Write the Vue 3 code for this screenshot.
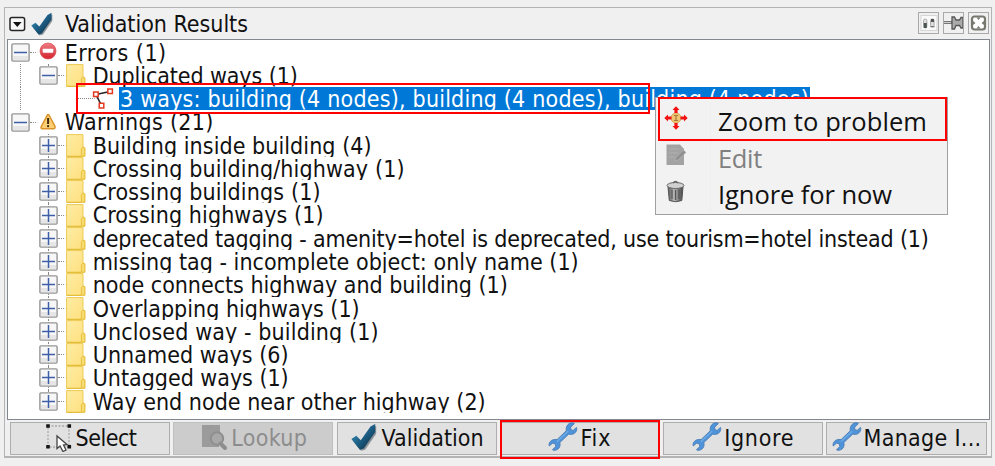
<script setup>
const rows = [
  { t: 'Errors (1)', level: 0, icon: 'error', open: true, w: 102 },
  { t: 'Duplicated ways (1)', level: 1, icon: 'folder', open: true, last: true, w: 205 },
  { t: '3 ways: building (4 nodes), building (4 nodes), building (4 nodes)', level: 2, icon: 'way', selected: true, w: 689 },
  { t: 'Warnings (21)', level: 0, icon: 'warning', open: true, last: true, w: 149 },
  { t: 'Building inside building (4)', level: 1, icon: 'folder', w: 279 },
  { t: 'Crossing building/highway (1)', level: 1, icon: 'folder', w: 312 },
  { t: 'Crossing buildings (1)', level: 1, icon: 'folder', w: 228 },
  { t: 'Crossing highways (1)', level: 1, icon: 'folder', w: 231 },
  { t: 'deprecated tagging - amenity=hotel is deprecated, use tourism=hotel instead (1)', level: 1, icon: 'folder', w: 836 },
  { t: 'missing tag - incomplete object: only name (1)', level: 1, icon: 'folder', w: 486 },
  { t: 'node connects highway and building (1)', level: 1, icon: 'folder', w: 415 },
  { t: 'Overlapping highways (1)', level: 1, icon: 'folder', w: 267 },
  { t: 'Unclosed way - building (1)', level: 1, icon: 'folder', w: 286 },
  { t: 'Unnamed ways (6)', level: 1, icon: 'folder', w: 196 },
  { t: 'Untagged ways (1)', level: 1, icon: 'folder', w: 196 },
  { t: 'Way end node near other highway (2)', level: 1, icon: 'folder', last: true, w: 393 },
]

const buttons = [
  { t: 'Select', icon: 'select', w: 61 },
  { t: 'Lookup', icon: 'lookup', w: 76, disabled: true },
  { t: 'Validation', icon: 'check', w: 102 },
  { t: 'Fix', icon: 'wrench', w: 31 },
  { t: 'Ignore', icon: 'wrench', w: 70 },
  { t: 'Manage I...', icon: 'wrench', w: 118 },
]

const menu = [
  { t: 'Zoom to problem', icon: 'zoom', w: 209 },
  { t: 'Edit', icon: 'edit', w: 44, disabled: true },
  { t: 'Ignore for now', icon: 'trash', w: 174 },
]

// Spreads a label's letters so that the label has the given width.
const vFit = {
  mounted(el, { value }) {
    const natural = el.getBoundingClientRect().width
    el.style.letterSpacing = (value - natural) / el.textContent.length + 'px'
  },
}
</script>

<template>
  <svg class="defs" width="0" height="0" aria-hidden="true">
    <defs>
      <linearGradient id="gCheck" x1="0" y1="0" x2="1" y2="1">
        <stop offset="0" stop-color="#3f9cc4" /><stop offset=".5" stop-color="#1d5f86" /><stop offset="1" stop-color="#0b2438" />
      </linearGradient>
      <linearGradient id="gFolder" x1="0" y1="0" x2="1" y2="1">
        <stop offset="0" stop-color="#ffeca5" /><stop offset="1" stop-color="#fddf7c" />
      </linearGradient>
      <linearGradient id="gRed" x1="0" y1="0" x2="0" y2="1">
        <stop offset="0" stop-color="#ee7f84" /><stop offset="1" stop-color="#d3222d" />
      </linearGradient>
      <linearGradient id="gTrash" x1="0" y1="0" x2="1" y2="0">
        <stop offset="0" stop-color="#555" /><stop offset=".4" stop-color="#bbb" /><stop offset="1" stop-color="#444" />
      </linearGradient>
      <symbol id="check" viewBox="0 0 22 24">
        <path d="M2 15.5 L5 13.5 L9 17 L18 4 L21.3 2.500 V9 L12 22.500 L8.500 23.500 Z" fill="#70777c" opacity=".75" />
        <path d="M.3 13.500 L4.500 10.800 L8.300 14.500 L16.500 3 L20.500 .8 V7.500 L10.800 21.500 L7.500 22.500 Z" fill="url(#gCheck)" />
      </symbol>
      <symbol id="wrench" viewBox="0 0 30 30">
        <path d="M21.2 1.6 C23.4 .4 25.7 .7 26.4 1.6 L22.6 5.2 L23.2 8.2 L25.3 8.2 L28.5 5.4 C29.6 8.2 27.5 11.7 24 12.3 L20.5 12.3 L11.8 20.6 C13 24.5 10.4 28.6 5.8 28.3 L4.5 27.8 L7.8 24.4 L7 21.5 L4.4 21.3 L1.2 24 C.3 20.8 3.3 17.3 7 17.5 L9.2 17.5 L18.2 8.8 C17.9 5.8 18.7 3.1 21.2 1.6 Z" fill="#4f93d8" stroke="#4a7db5" stroke-width=".9" />
        <path d="M9 19.5 L20 9.2" stroke="#8fc3f4" stroke-width="1.4" opacity=".5" />
      </symbol>
    </defs>
  </svg>
  <div class="page">
    <section class="panel">
      <header class="title">
        <svg class="arrow" width="17" height="16" viewBox="0 0 17 16">
          <rect x="1" y="1.5" width="14.6" height="13" rx="2" fill="#f7f7f7" stroke="#262626" stroke-width="1.5" />
          <path d="M4 6 H12.6 L8.3 11 Z" fill="#111" />
        </svg>
        <svg class="tick" width="22" height="24"><use href="#check" /></svg>
        <span class="heading"><span v-fit="183" class="label">Validation Results</span></span>
        <span class="tools">
          <span class="tool">
            <svg width="20" height="20" viewBox="0 0 20 20">
              <rect x="2" y="2.5" width="16" height="15" fill="#fafafa" stroke="#d5d5d5" />
              <rect x="4.5" y="6" width="3.4" height="9" rx="1.6" fill="#ddd" stroke="#a0a0a0" stroke-width=".8" />
              <rect x="4.8" y="10" width="3" height="5" fill="#4b5553" />
              <rect x="11.5" y="6" width="3.6" height="8" rx="1.6" fill="#ddd" stroke="#a0a0a0" stroke-width=".8" />
              <rect x="12" y="6" width="3" height="3" fill="#555" /><path d="M11.5 13.7 h4" stroke="#666" />
            </svg>
          </span>
          <span class="tool">
            <svg width="20" height="20" viewBox="0 0 20 20">
              <path d="M0 9.5 H8" stroke="#777" stroke-width="3" /><path d="M0 9.5 H7" stroke="#ccc" stroke-width="1" />
              <path d="M8 4 H10.5 L12 7 H15.5 L17 4.5 H19 V15 H17 L15.5 12.5 H12 L10.5 16 H8 Z" fill="#aaa" stroke="#555" stroke-width="1.3" />
            </svg>
          </span>
          <span class="tool">
            <svg width="20" height="20" viewBox="0 0 20 20">
              <rect x="3" y="3.5" width="13" height="13" rx="2.5" fill="#fff" stroke="#77776f" stroke-width="2.2" />
              <path d="M7.500 4.500 H11.500 L9.500 7 Z M7.500 15.500 H11.500 L9.500 13 Z M4 8 V12 L6.500 10 Z M15 8 V12 L12.500 10 Z" fill="#77776f" />
            </svg>
          </span>
        </span>
      </header>

      <div class="tree">
        <div v-for="(r, i) in rows" :key="i" class="row" :class="['level' + r.level, { last: r.last }]">
          <i v-if="i > 0 && i < 3" class="trunk"></i>
          <span class="toggle">
            <svg v-if="r.level < 2" width="19" height="19" viewBox="0 0 19 19">
              <rect x=".9" y=".9" width="17.2" height="17.2" rx="1" fill="#f7f7f7" stroke="#969696" stroke-width="1.4" />
              <path d="M2 13 H17 V17 H2 Z" fill="#e6e6e6" />
              <path d="M3 9.5 H16" stroke="#3e5fa8" stroke-width="1.5" />
              <path v-if="!r.open" d="M9.5 3 V16" stroke="#3e5fa8" stroke-width="1.5" />
            </svg>
          </span>
          <span class="dots"></span>
          <span class="icon">
            <svg v-if="r.icon === 'folder'" width="20" height="23" viewBox="0 0 20 23">
              <path d="M.6 .6 H17 V13 L18.8 13.6 V22.4 H.6 Z" fill="url(#gFolder)" stroke="#eccb52" stroke-width="1" />
              <path d="M15.4 22 V14.5 L17 13.2 L18.8 14 V22 Z" fill="#f7dc72" stroke="#e6c043" stroke-width="1" />
              <path d="M.6 22.4 H15" stroke="#e3bd3c" stroke-width="1.2" />
            </svg>
            <svg v-else-if="r.icon === 'error'" class="round error" width="18" height="18" viewBox="0 0 18 18">
              <circle cx="9" cy="9" r="8" fill="url(#gRed)" stroke="#dc4a50" stroke-width=".7" />
              <rect x="3.7" y="6.7" width="10.6" height="4" rx=".6" fill="#fff" />
            </svg>
            <svg v-else-if="r.icon === 'warning'" class="round" width="18" height="18" viewBox="0 0 18 18">
              <path d="M8.5 1.8 Q9.2 1 10 2 L16 13.3 Q16.5 15.5 14.8 15.7 H3.3 Q1.5 15.5 2.2 13.5 Z" fill="#fbcf72" stroke="#d9942c" stroke-width="1.5" stroke-linejoin="round" />
              <path d="M9.1 5 V11" stroke="#3d2a12" stroke-width="2" /><circle cx="9.1" cy="13.2" r="1.1" fill="#3d2a12" />
            </svg>
            <svg v-else class="way" width="24" height="23" viewBox="0 0 24 23">
              <path d="M20 4.5 L6 7.5 L11.5 18.5" fill="none" stroke="#222" stroke-width="1.6" />
              <path d="M17.8 2 h4.6 v4.6 h-4.6 Z M3.6 5 h4.6 v4.6 h-4.6 Z M9.2 16.3 h4.6 v4.6 h-4.6 Z" fill="#fff" stroke="#e23a20" stroke-width="1.5" />
            </svg>
          </span>
          <span class="text" :class="{ selected: r.selected }"><span v-fit="r.w" class="label">{{ r.t }}</span></span>
        </div>
      </div>

      <footer class="buttons">
        <button v-for="b in buttons" :key="b.t" class="button" :class="{ disabled: b.disabled }">
          <svg v-if="b.icon === 'select'" width="30" height="30" viewBox="0 0 30 30">
            <path d="M4 4 H25 V25 H4 Z" fill="none" stroke="#aaa" stroke-width="1.3" stroke-dasharray="2 1.5" />
            <path d="M2.200 2.200 h3.600 v3.600 h-3.600 Z M23.500 2.200 h3.600 v3.600 h-3.600 Z M2.200 23 h3.600 v3.600 h-3.600 Z M23.500 23 h3.600 v3.600 h-3.600 Z" fill="#151515" />
            <path d="M13 14 V26.500 L16 24 L19 29.500 L22 28 L19.500 23 L23 22.500 Z" fill="#fff" stroke="#444" stroke-width="1.3" />
          </svg>
          <svg v-else-if="b.icon === 'lookup'" width="30" height="30" viewBox="0 0 30 30">
            <path d="M3 3 H21 V14 L20 25 H3 Z" fill="#9b9b9b" />
            <circle cx="18" cy="16.500" r="6.200" fill="#a8a8a8" stroke="#8e8e8e" stroke-width="2" />
            <path d="M21.500 21.500 L26 26" stroke="#8e8e8e" stroke-width="4" stroke-linecap="round" />
          </svg>
          <svg v-else-if="b.icon === 'check'" width="30" height="30" viewBox="-1 -1 30 30"><use href="#check" width="26" height="28.500" /></svg>
          <svg v-else width="30" height="30"><use href="#wrench" /></svg>
          <span v-fit="b.w" class="label">{{ b.t }}</span>
        </button>
      </footer>
    </section>

    <i class="mark mark-row"></i>
    <div class="menu">
      <div v-for="m in menu" :key="m.t" class="item" :class="{ disabled: m.disabled }">
        <span class="glyph">
          <svg v-if="m.icon === 'zoom'" width="24" height="24" viewBox="0 0 24 24">
            <circle cx="12" cy="12" r="5" fill="#f0c674" stroke="#d8a55a" />
            <path d="M10 9.500 h4 M10 14.500 h4 M12 9.500 v5" stroke="#a67c35" stroke-width="1.200" />
            <path d="M12 .3 L15.500 4 H13.600 V7 H10.400 V4 H8.500 Z M12 23.700 L15.500 20 H13.600 V17 H10.400 V20 H8.500 Z M.3 12 L4 8.500 V10.400 H7.500 V13.600 H4 V15.500 Z M23.700 12 L20 8.500 V10.400 H16.500 V13.600 H20 V15.500 Z" fill="#f21010" />
          </svg>
          <svg v-else-if="m.icon === 'edit'" width="24" height="24" viewBox="0 0 24 24">
            <path d="M2.500 1.500 H16 L20 6 V22 H2.500 Z" fill="#a3a3a3" />
            <path d="M5 6 H15 M5 10 H14 M5 14 H11" stroke="#b0b0b0" />
            <path d="M19.500 7 L22 9.500 L14 17 L10.500 18 L12 14.500 Z" fill="#8f8f8f" stroke="#bbb" stroke-width=".6" />
          </svg>
          <svg v-else width="24" height="24" viewBox="0 0 24 24">
            <path d="M4 8 H19 L17.800 21.500 Q11.500 24 5.300 21.500 Z" fill="url(#gTrash)" stroke="#555" />
            <path d="M8 10.500 V20 M11.500 11 V21 M15 10.500 V20" stroke="#555" stroke-width="1.200" />
            <ellipse cx="11.500" cy="6.500" rx="8.500" ry="3" fill="#d0d0d0" stroke="#666" />
            <path d="M9 4 Q11.500 1 14 4" fill="none" stroke="#666" stroke-width="1.300" />
          </svg>
        </span>
        <span v-fit="m.w" class="label">{{ m.t }}</span>
      </div>
    </div>
    <i class="mark mark-menu"></i>
    <i class="mark mark-fix"></i>
  </div>
</template>

<style>
body { background: #f0f0f0; overflow: hidden; }
</style>

<style scoped>
.defs { position: absolute; }
.page {
  position: relative; box-sizing: border-box; width: 995px; height: 466px;
  padding: 7px 3px 8px 4px; background: #f0f0f0; color: #111;
  font: 23px/25px "DejaVu Sans Condensed", "DejaVu Sans", sans-serif; font-stretch: condensed;
}
svg { display: block; flex: none; }
.label { display: inline-block; white-space: pre; }
.panel {
  box-sizing: border-box; height: 451px; display: flex; flex-direction: column;
  border: 1px solid #b4b4b4; border-width: 1px 1px 2px 1px; padding: 0 1px 0 2px;
}
.title { height: 31px; display: flex; align-items: center; padding-left: 2px; }
.arrow { margin-top: 1px; }
.tick { margin: 0 0 0 5px; }
.heading { margin: 2px 0 0 12px; }
.tools { margin-left: auto; display: flex; gap: 4px; padding-right: 1px; }
.tool { width: 19px; height: 20px; border: 1px solid #a9a9a9; display: flex; margin-bottom: 1px; overflow: hidden; }
.tree {
  box-sizing: border-box; height: 381px; background: #fff; border: 1px solid #828790;
  padding-top: .6px; overflow: hidden;
}
.row { position: relative; display: flex; height: 23.27px; align-items: center; padding-left: 3px; }
.level1 { padding-left: 31px; }
.level2 { padding-left: 58px; }
.toggle { width: 19px; z-index: 1; }
.dots { width: 8px; height: 0; border-top: 1px dotted #888; box-sizing: border-box; border-right: 3px solid transparent; }
.icon { width: 26px; height: 23px; display: flex; align-items: center; }
.round { margin-left: 1px; }
.error { margin-bottom: 2px; }
.way { margin-left: -3px; }
.level1::before, .level2::before {
  content: ""; position: absolute; left: 40px; top: 0; height: 23.27px; border-left: 1px dotted #888;
}
.level2::before { left: 68px; height: 12px; }
.level2 .dots { width: 23px; margin-left: -9px; margin-right: -6px; border-right-width: 8px; }
.last::before { height: 12px; }
.trunk { position: absolute; left: 12px; top: 0; height: 23.27px; border-left: 1px dotted #888; }
.text { height: 23.27px; overflow: hidden; padding: 0 1px 0 .7px; }
.selected { background: #0078d7; color: #fff; padding: 0 1px; }
.buttons { display: flex; gap: 3.25px; padding: 2px 3.5px 0 3px; }
.button {
  box-sizing: border-box; flex: 1 1 0; height: 33px; padding: 0; border: 1px solid #adadad;
  background: #e1e1e1; color: #111; font: inherit; display: flex; align-items: center; justify-content: center; gap: 2px;
  white-space: nowrap; min-width: 0;
}
.button svg { margin-bottom: 3px; }
.button.disabled { background: #ccc; border-color: #bfbfbf; color: #8c8c8c; }
.menu {
  position: absolute; left: 655px; top: 97px; width: 293px; height: 118px; box-sizing: border-box;
  border: 1px solid #a0a0a0; background: #f2f2f2; padding: 5px 0 0 8px;
  font: 25.5px/36.5px "Open Sans", "Noto Sans", sans-serif;
}
.item { height: 36.5px; display: flex; }
.glyph { width: 46px; margin-right: 7px; border-right: 1px solid #eee; padding-top: 3px; }
.item.disabled { color: #808080; }
.mark { position: absolute; box-sizing: border-box; border: 2px solid #f00; }
.mark-row { left: 76px; top: 83px; width: 574px; height: 31px; }
.mark-menu { left: 658px; top: 97px; width: 289px; height: 44px; }
.mark-fix { left: 500px; top: 420px; width: 160px; height: 39px; }
</style>
